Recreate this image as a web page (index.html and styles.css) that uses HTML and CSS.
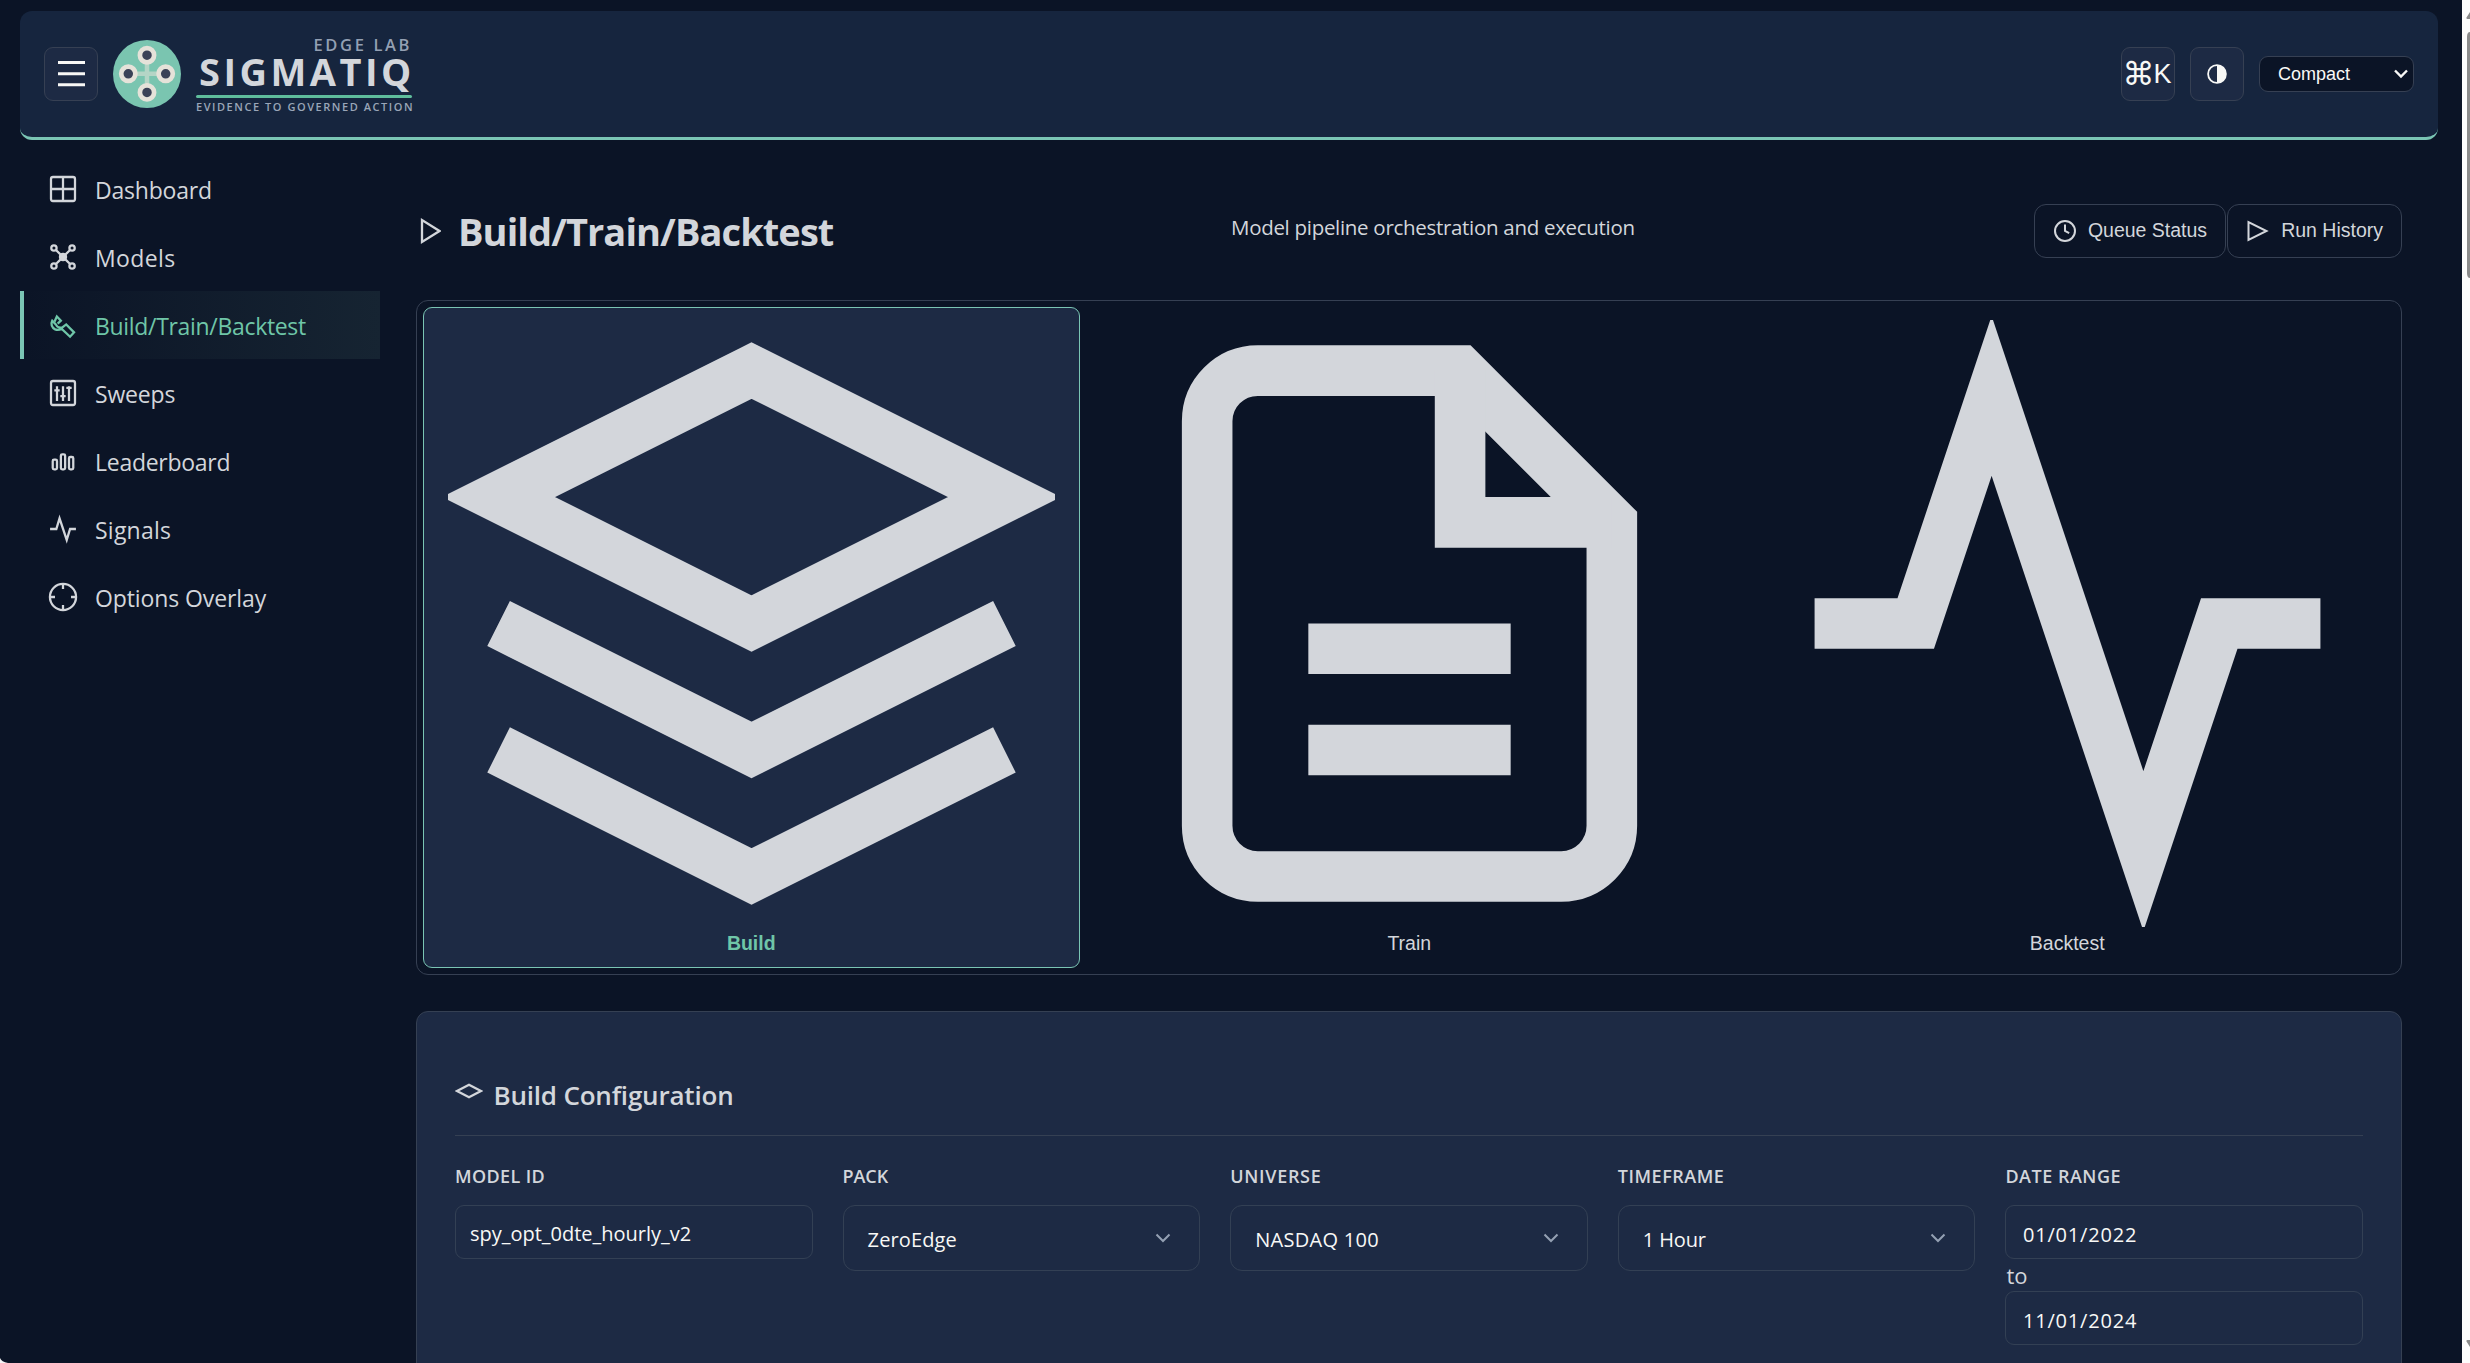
FILE: index.html
```html
<!DOCTYPE html>
<html lang="en">
<head>
<meta charset="utf-8">
<title>Sigmatiq Edge Lab</title>
<link rel="stylesheet" href="styles.css">
</head>
<body>
<div class="app">
  <header class="topbar">
    <button class="icon-btn" aria-label="Menu">
      <svg width="28" height="28" viewBox="0 0 28 28" fill="#f8f8f6"><path d="M1 1h27v3H1zM1 12.200h27v3H1zM1 23.300h27v3H1z"/></svg>
    </button>
    <div class="brand">
      <svg class="logo" width="68" height="68" viewBox="0 0 68 68">
        <circle cx="34" cy="34" r="34" fill="#7ac5b0"/>
        <path d="M15 33.700h38M34 15v38" stroke="#e5e2d9" stroke-opacity=".55" stroke-width="4.500"/>
        <g fill="#3a4257" stroke="#e5e2d9" stroke-width="4.700">
          <circle cx="34" cy="15.200" r="7.100"/><circle cx="15.300" cy="33.800" r="7.100"/><circle cx="52.700" cy="33.800" r="7.100"/><circle cx="34" cy="52.400" r="7.100"/>
        </g>
      </svg>
      <div class="wordmark">
        <span class="wm-top">EDGE LAB</span>
        <span class="wm-name">SIGMATIQ</span>
        <span class="wm-rule"></span>
        <span class="wm-tag">EVIDENCE TO GOVERNED ACTION</span>
      </div>
    </div>
    <div class="top-actions">
      <button class="icon-btn kbd"><span class="cmd">⌘</span><span>K</span></button>
      <button class="icon-btn" aria-label="Theme">
        <svg width="20" height="20" viewBox="0 0 20 20"><circle cx="10" cy="10" r="8.900" fill="none" stroke="#f8f8f6" stroke-width="1.800"/><path d="M10 1a9 9 0 0 1 0 18z" fill="#f8f8f6"/></svg>
      </button>
      <div class="density"><span>Compact</span><svg width="14" height="10" viewBox="0 0 14 10" fill="none" stroke="#f8f8f6" stroke-width="2.400"><path d="M1 1.500l6 6 6-6"/></svg></div>
    </div>
  </header>

  <div class="shell">
    <nav class="sidebar">
      <a class="nav-item"><svg class="ico" viewBox="0 0 24 24"><rect x="3" y="3" width="18" height="18" rx="1.500"/><path d="M3 12h18M12 3v18"/></svg><span class="n1">Dashboard</span></a>
      <a class="nav-item"><svg class="ico" viewBox="0 0 24 24"><circle cx="12" cy="12" r="2.300" fill="currentColor"/><circle cx="5.200" cy="5.200" r="2"/><circle cx="18.800" cy="5.200" r="2"/><circle cx="5.200" cy="18.800" r="2"/><circle cx="18.800" cy="18.800" r="2"/><path d="M6.700 6.700L11 11M17.300 6.700L13 11M6.700 17.300L11 13M17.300 17.300L13 13"/></svg><span class="n2">Models</span></a>
      <a class="nav-item active"><svg class="ico" viewBox="0 0 24 24"><path d="M3.900 8.800a4.700 4.700 0 0 0 2.200 6.500 5 5 0 0 0 4.800-.6l6.400 6.100 3-3.300-5.900-5.900-2.900 2.200a4 4 0 0 1-4.900-2.300z"/><path d="M5.600 9.600L7.400 5.600l3 3.100L8 11"/></svg><span class="n3">Build/Train/Backtest</span></a>
      <a class="nav-item"><svg class="ico" viewBox="0 0 24 24"><rect x="3" y="3" width="18" height="18" rx="1.500"/><path d="M7.500 7v11M12 7v11M16.500 7v11M5.500 10h4M10 14.300h4M14.500 8.200h4"/></svg><span class="n4">Sweeps</span></a>
      <a class="nav-item"><svg class="ico" viewBox="0 0 24 24"><rect x="4.300" y="11" width="3.200" height="7.200" rx="1"/><rect x="10.400" y="7" width="3.200" height="11.200" rx="1"/><rect x="16.500" y="9" width="3.200" height="9.200" rx="1"/></svg><span class="n5">Leaderboard</span></a>
      <a class="nav-item"><svg class="ico" viewBox="0 0 24 24"><path d="M2.300 12H7L9.400 4l5.400 16.200L17.300 12h4.400"/></svg><span class="n6">Signals</span></a>
      <a class="nav-item"><svg class="ico" viewBox="0 0 24 24"><circle cx="12" cy="12" r="9.800"/><path d="M12 2.500V6M12 18v3.500M2.500 12H6M18 12h3.500"/></svg><span class="n7">Options Overlay</span></a>
    </nav>

    <main class="content">
      <div class="page-head">
        <div class="title">
          <svg width="22" height="28" viewBox="0 0 22 28" fill="none" stroke="#d3d6db" stroke-width="2.300"><path d="M3 3v22L20.500 14z"/></svg>
          <h1>Build/Train/Backtest</h1>
        </div>
        <p class="subtitle">Model pipeline orchestration and execution</p>
        <div class="head-actions">
          <button class="btn"><svg width="24" height="24" viewBox="0 0 24 24"><circle cx="12" cy="12" r="10"/><path d="M12 5.500V12l4.200 2.200"/></svg><span>Queue Status</span></button>
          <button class="btn"><svg width="24" height="24" viewBox="0 0 24 24"><path d="M2.500 3v18l18-9z"/></svg><span>Run History</span></button>
        </div>
      </div>

      <div class="tabs">
        <button class="tab active">
          <svg viewBox="0 0 24 24"><path d="M12 2L2 7l10 5 10-5zM2 17l10 5 10-5M2 12l10 5 10-5"/></svg>
          <span>Build</span>
        </button>
        <button class="tab">
          <svg viewBox="0 0 24 24"><path d="M14 2H6a2 2 0 0 0-2 2v16a2 2 0 0 0 2 2h12a2 2 0 0 0 2-2V8z"/><path d="M14 2v6h6M16 13H8M16 17H8"/></svg>
          <span>Train</span>
        </button>
        <button class="tab">
          <svg viewBox="0 0 24 24"><path d="M22 12h-4l-3 9L9 3l-3 9H2"/></svg>
          <span>Backtest</span>
        </button>
      </div>

      <section class="card">
        <div class="card-head">
          <svg width="28" height="18" viewBox="0 0 28 18" fill="none" stroke="#d3d6db" stroke-width="2.400"><path d="M2 9l12-6.200L26 9l-12 6.200z"/></svg>
          <h2>Build Configuration</h2>
        </div>
        <div class="fields">
          <div class="field"><label class="l1">MODEL ID</label><div class="input text">spy_opt_0dte_hourly_v2</div></div>
          <div class="field"><label class="l2">PACK</label><div class="input select"><span class="v1">ZeroEdge</span><svg class="chev" viewBox="0 0 16 10"><path d="M1.500 1.500L8 8l6.500-6.500"/></svg></div></div>
          <div class="field"><label class="l3">UNIVERSE</label><div class="input select"><span class="v2">NASDAQ 100</span><svg class="chev" viewBox="0 0 16 10"><path d="M1.500 1.500L8 8l6.500-6.500"/></svg></div></div>
          <div class="field"><label class="l4">TIMEFRAME</label><div class="input select"><span class="v3">1 Hour</span><svg class="chev" viewBox="0 0 16 10"><path d="M1.500 1.500L8 8l6.500-6.500"/></svg></div></div>
          <div class="field"><label class="l5">DATE RANGE</label><div class="input date">01/01/2022</div><span class="to">to</span><div class="input date">11/01/2024</div></div>
        </div>
      </section>
    </main>
  </div>
</div>
<div class="scrollbar"><svg width="8" height="1363" viewBox="0 0 8 1363" fill="#8b8b8b"><path d="M4.500 17.500L8 12v7H5.500a1 1 0 0 1-1-1.500zM4.500 1341.500q-.5-1.500 1-1.500H8v7z"/><path d="M8 32q-3 0-3 5v236q0 5 3 5z"/></svg></div>
<svg class="corner" width="8" height="5" viewBox="0 0 8 5"><path d="M0 0q1.500 4 8 5H0z" fill="#f4f4f6"/></svg>
</body>
</html>
```
FILE: styles.css
```css
* { box-sizing: border-box; }
html, body { height: 100%; }
body {
  margin: 0;
  overflow: hidden;
  background: #0b1426;
  color: #d3d6db;
  font-family: "Open Sans", "Noto Sans", sans-serif;
  font-size: 23px;
}
button { font: inherit; color: inherit; margin: 0; padding: 0; background: none; border: 0; }
h1, h2, p { margin: 0; }

.app { width: 2462px; height: 1363px; overflow: hidden; padding: 11px 24px 0 20px; }

/* Header */
.topbar {
  height: 129px;
  display: flex;
  align-items: center;
  padding: 0 24px 1px;
  background: #16253e;
  border-bottom: 3px solid #7ac5b4;
  border-radius: 12px;
}
.icon-btn {
  width: 54px;
  height: 54px;
  display: flex;
  align-items: center;
  justify-content: center;
  background: #1d2a44;
  border: 1px solid #364053;
  border-radius: 9px;
}
.brand { display: flex; align-items: center; margin-left: 15px; }
.wordmark { width: 216px; margin-left: 15px; display: flex; flex-direction: column; white-space: nowrap; padding-top: 8px; }
.wm-top { align-self: flex-end; font-size: 16.500px; font-weight: 600; line-height: 10px; letter-spacing: 2.620px; color: #94a0b3; }
.wm-name { font-size: 38px; font-weight: 700; line-height: 43px; padding-bottom: 2px; letter-spacing: 3.480px; padding-left: 3px; }
.wm-rule { height: 3px; border-radius: 2px; background: #5fbd9c; }
.wm-tag { font-size: 11px; font-weight: 600; line-height: 17px; letter-spacing: 1.550px; color: #9aa6b8; }
.top-actions { margin-left: auto; display: flex; align-items: center; gap: 15px; }
.kbd { font: 27px/54px "Liberation Sans", sans-serif; color: #f8f8f6; }
.kbd .cmd { font: 32px/50px "DejaVu Sans", sans-serif; margin-right: -1px; margin-left: -2px; }
.density {
  width: 155px;
  height: 36px;
  display: flex;
  align-items: center;
  justify-content: space-between;
  padding: 1px 5px 0 18px;
  background: #0b1426;
  border: 1px solid #364053;
  border-radius: 9px;
  font: 18px "Liberation Sans", sans-serif;
  color: #f8f8f6;
}

/* Sidebar */
.shell { display: flex; }
.sidebar { width: 360px; padding-top: 15px; }
.nav-item {
  height: 68px;
  display: flex;
  align-items: center;
  gap: 16px;
  padding: 0 0 0 23px;
  border-left: 4px solid transparent;
}
.nav-item span { line-height: 32px; padding-top: 2px; }
.nav-item.active {
  border-left-color: #7ac5b4;
  color: #6fc6a8;
  background: linear-gradient(90deg, #0b1426 0%, #162432 100%);
}
.ico { width: 32px; height: 32px; fill: none; stroke: currentColor; stroke-width: 1.700; margin-top: -1px; }
.n1 { letter-spacing: -.2px; }
.n2 { letter-spacing: .4px; }
.n3 { letter-spacing: -.32px; }
.n4 { letter-spacing: -.17px; }
.n5 { letter-spacing: -.27px; }
.n6 { letter-spacing: .23px; }
.n7 { letter-spacing: -.1px; }

/* Page head */
.content { width: 1986px; margin-left: 36px; }
.page-head { height: 160px; display: flex; align-items: flex-start; }
.title { display: flex; align-items: center; gap: 17px; width: 812px; margin: 64px 0 0 3px; }
h1 { font-size: 38px; line-height: 54px; font-weight: 700; letter-spacing: -.92px; }
.subtitle { font-size: 20.500px; line-height: 30px; letter-spacing: -.3px; margin-top: 72px; white-space: nowrap; }
.head-actions { display: flex; gap: 1px; margin: 64px 0 0 auto; }
.btn {
  height: 54px;
  display: flex;
  align-items: center;
  gap: 11px;
  padding: 0 18px 1px;
  border: 1px solid #364053;
  border-radius: 12px;
  font: 19.500px "Liberation Sans", sans-serif;
  white-space: nowrap;
}
.btn svg { fill: none; stroke: currentColor; stroke-width: 2; }

/* Tabs */
.tabs {
  display: grid;
  grid-template-columns: repeat(3, 656.500px);
  gap: 1.500px;
  padding: 6px;
  height: 675px;
  border: 1px solid #364053;
  border-radius: 12px;
}
.tab {
  display: flex;
  flex-direction: column;
  align-items: center;
  padding: 12px 24px 10px;
  border: 1px solid transparent;
  border-radius: 9px;
  font: 19.500px/24px "Liberation Sans", sans-serif;
}
.tab svg { width: 607px; height: 607px; fill: none; stroke: #d3d6db; stroke-width: 2; }
.tab span { margin-top: 4px; }
.tab.active { background: #1d2a44; border-color: #7ac5b4; color: #6fc6a8; font-weight: 700; }

/* Configuration card */
.card {
  height: 500px;
  margin-top: 36px;
  padding: 60px 38px 0;
  background: #1d2a44;
  border: 1px solid #354053;
  border-radius: 12px;
}
.card-head { height: 64px; display: flex; align-items: flex-start; gap: 11px; border-bottom: 1px solid #354053; }
.card-head svg { margin: 10px 0 0 -.500px; }
h2 { font-size: 26px; line-height: 36px; font-weight: 600; letter-spacing: -.2px; margin-top: 5px; }
.fields { display: grid; grid-template-columns: repeat(5, 1fr); gap: 30px; padding-top: 27px; }
.field { display: flex; flex-direction: column; }
label { font-size: 18px; font-weight: 600; line-height: 26px; margin-bottom: 16px; }
.l1 { letter-spacing: .37px; }
.l2 { letter-spacing: -.1px; }
.l3 { letter-spacing: .7px; }
.l4, .l5 { letter-spacing: .51px; }
.input {
  height: 54px;
  display: flex;
  align-items: center;
  border: 1px solid #334054;
  border-radius: 9px;
  font-size: 20px;
  color: #f8f8f6;
}
.text { padding: 2px 0 0 14px; letter-spacing: -.02px; }
.select { height: 66px; border-radius: 12px; justify-content: space-between; padding: 2px 28px 0 24px; }
.date { padding: 4px 0 0 16.500px; letter-spacing: .81px; }
.v1 { letter-spacing: .13px; }
.v2 { letter-spacing: .28px; }
.v3 { letter-spacing: -.13px; }
.chev { width: 16px; height: 10px; fill: none; stroke: #94a0b3; stroke-width: 2; margin-top: -3px; }
.to { font-size: 22px; line-height: 33px; height: 32px; padding-left: 1px; }

/* Window edges */
.scrollbar { position: fixed; right: 0; top: 0; width: 8px; height: 100%; background: #fcfcfc; }
.scrollbar svg { display: block; }
.corner { position: fixed; left: 0; bottom: 0; }
```
